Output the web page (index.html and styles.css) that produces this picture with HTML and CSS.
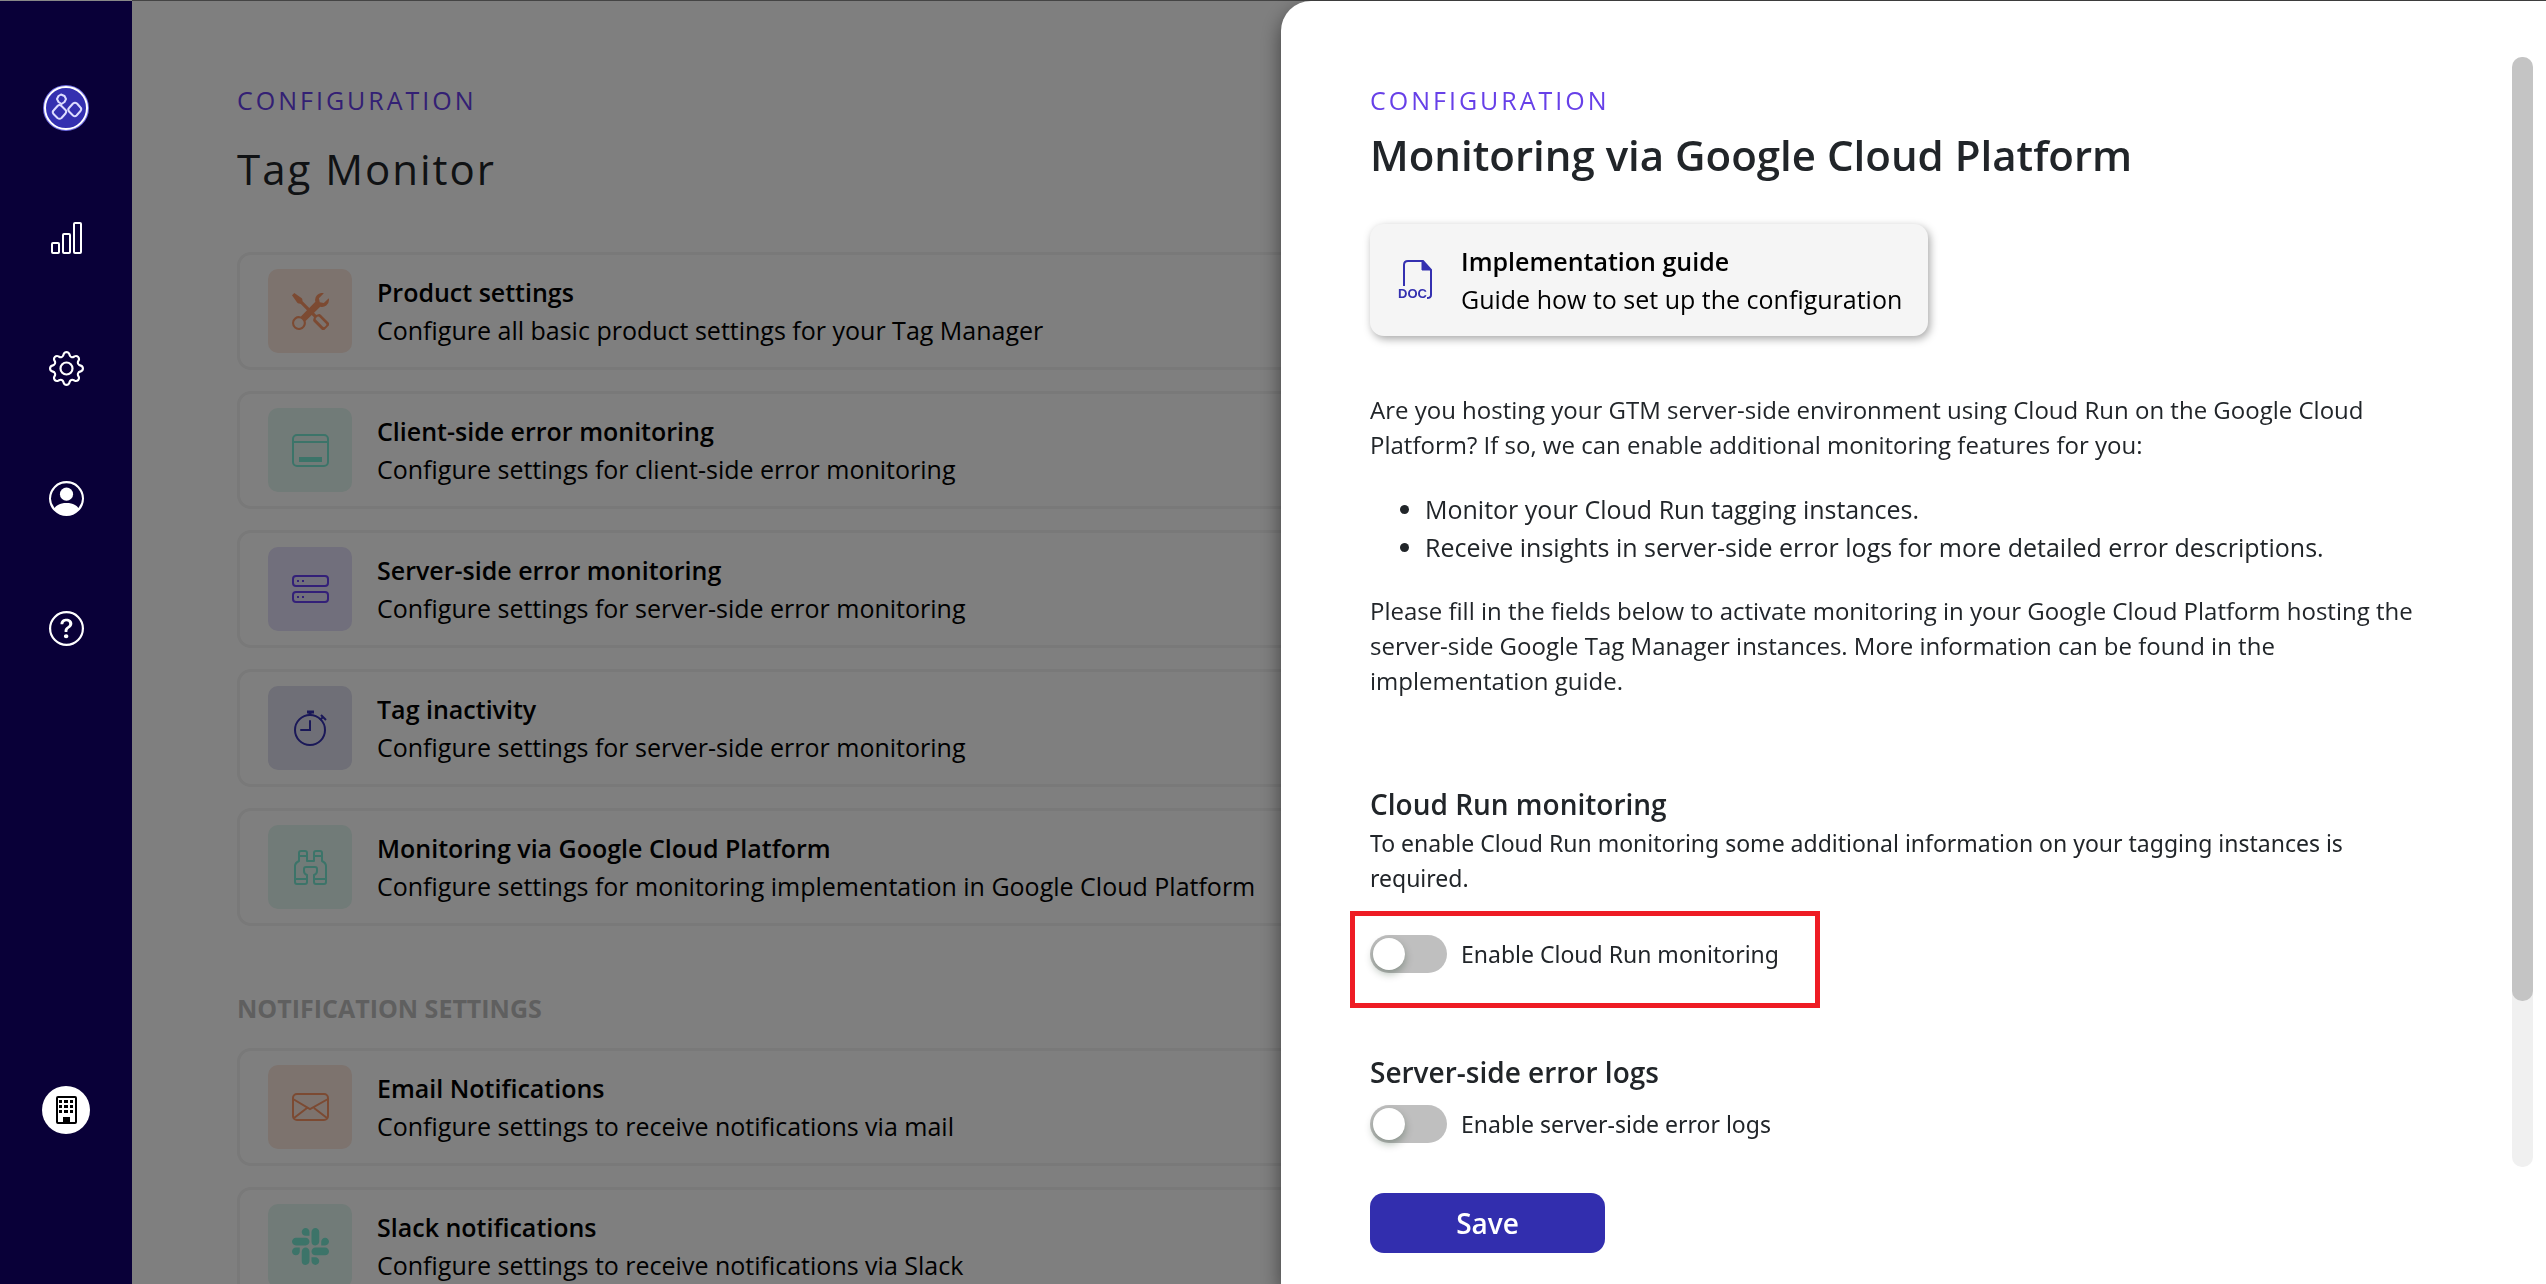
FILE: index.html
```html
<!DOCTYPE html>
<html lang="en">
<head>
<meta charset="utf-8">
<meta name="viewport" content="width=device-width, initial-scale=1">
<title>Tag Monitor – Configuration</title>
<link rel="stylesheet" href="styles.css">
</head>
<body>
<div class="app">
  <nav class="sidebar" aria-label="Main">
    <a class="nav-link logo" href="#" aria-label="Home">
      <svg width="46" height="46" viewBox="0 0 46 46" fill="none">
        <circle cx="23" cy="23" r="22" fill="#3430b0" stroke="#6e6be0" stroke-width="2"/>
        <circle cx="23" cy="23" r="21" stroke="#fff" stroke-width="2"/>
        <g stroke="#dcdcff" stroke-width="2" stroke-linejoin="round">
          <path d="M18 9.500l3.500 1.500 1.500 3-1.500 3-3 2-3-2-1.500-3 1.500-3z"/>
          <path d="M14.500 21q2-2 4 0l4 4q1.500 1.500 0 3.500l-4 4.500q-2 1.500-4 0l-4-4q-1.500-2 0-3.500z"/>
          <path d="M30 18.500q2-1.500 4 0l3.500 4q1.500 1.500 0 3.500l-4 4.500q-1.500 1.500-3.500 0l-4-4q-1.500-2 0-3.500z"/>
        </g>
      </svg>
    </a>
    <a class="nav-link" href="#" aria-label="Reports">
      <svg width="33" height="33" viewBox="0 0 33 33" fill="none" stroke="#fff" stroke-width="2">
        <rect x="2" y="21" width="7" height="10" rx="1"/><rect x="13" y="12" width="7" height="19" rx="1"/><rect x="24" y="1" width="7" height="30" rx="1"/>
      </svg>
    </a>
    <a class="nav-link" href="#" aria-label="Settings">
      <svg width="35" height="35" viewBox="0 0 16 16" fill="#fff">
        <path d="M8 4.754a3.246 3.246 0 1 0 0 6.492 3.246 3.246 0 0 0 0-6.492zM5.754 8a2.246 2.246 0 1 1 4.492 0 2.246 2.246 0 0 1-4.492 0z"/>
        <path d="M9.796 1.343c-.527-1.790-3.065-1.790-3.592 0l-.094.319a.873.873 0 0 1-1.255.52l-.292-.16c-1.640-.892-3.433.902-2.540 2.541l.159.292a.873.873 0 0 1-.52 1.255l-.319.094c-1.790.527-1.790 3.065 0 3.592l.319.094a.873.873 0 0 1 .52 1.255l-.16.292c-.892 1.640.901 3.434 2.541 2.540l.292-.159a.873.873 0 0 1 1.255.52l.094.319c.527 1.790 3.065 1.790 3.592 0l.094-.319a.873.873 0 0 1 1.255-.52l.292.16c1.640.893 3.434-.902 2.540-2.541l-.159-.292a.873.873 0 0 1 .52-1.255l.319-.094c1.790-.527 1.790-3.065 0-3.592l-.319-.094a.873.873 0 0 1-.52-1.255l.16-.292c.893-1.640-.902-3.433-2.541-2.540l-.292.159a.873.873 0 0 1-1.255-.52l-.094-.319zm-2.633.283c.246-.835 1.428-.835 1.674 0l.094.319a1.873 1.873 0 0 0 2.693 1.115l.291-.16c.764-.415 1.600.42 1.184 1.185l-.159.292a1.873 1.873 0 0 0 1.116 2.692l.318.094c.835.246.835 1.428 0 1.674l-.319.094a1.873 1.873 0 0 0-1.115 2.693l.16.291c.415.764-.42 1.600-1.185 1.184l-.291-.159a1.873 1.873 0 0 0-2.693 1.116l-.094.318c-.246.835-1.428.835-1.674 0l-.094-.319a1.873 1.873 0 0 0-2.692-1.115l-.292.16c-.764.415-1.600-.42-1.184-1.185l.159-.291A1.873 1.873 0 0 0 1.945 8.930l-.319-.094c-.835-.246-.835-1.428 0-1.674l.319-.094A1.873 1.873 0 0 0 3.060 4.377l-.16-.292c-.415-.764.42-1.600 1.185-1.184l.292.159a1.873 1.873 0 0 0 2.692-1.115l.094-.319z"/>
      </svg>
    </a>
    <a class="nav-link" href="#" aria-label="Account">
      <svg width="35" height="35" viewBox="0 0 16 16" fill="#fff">
        <path d="M11 6a3 3 0 1 1-6 0 3 3 0 0 1 6 0z"/>
        <path fill-rule="evenodd" d="M0 8a8 8 0 1 1 16 0A8 8 0 0 1 0 8zm8-7a7 7 0 0 0-5.468 11.370C3.242 11.226 4.805 10 8 10s4.757 1.225 5.468 2.370A7 7 0 0 0 8 1z"/>
      </svg>
    </a>
    <a class="nav-link" href="#" aria-label="Help">
      <svg width="35" height="35" viewBox="0 0 16 16" fill="#fff">
        <path d="M8 15A7 7 0 1 1 8 1a7 7 0 0 1 0 14zm0 1A8 8 0 1 0 8 0a8 8 0 0 0 0 16z"/>
        <path d="M5.255 5.786a.237.237 0 0 0 .241.247h.825c.138 0 .248-.113.266-.25.09-.656.54-1.134 1.342-1.134.686 0 1.314.343 1.314 1.168 0 .635-.374.927-.965 1.371-.673.489-1.206 1.060-1.168 1.987l.003.217a.25.25 0 0 0 .25.246h.811a.25.25 0 0 0 .25-.25v-.105c0-.718.273-.927 1.010-1.486.609-.463 1.244-.977 1.244-2.056 0-1.511-1.276-2.241-2.673-2.241-1.267 0-2.655.59-2.750 2.286zm1.557 5.763c0 .533.425.927 1.010.927.609 0 1.028-.394 1.028-.927 0-.552-.42-.94-1.029-.94-.584 0-1.009.388-1.009.94z"/>
      </svg>
    </a>
    <a class="nav-link org" href="#" aria-label="Organisation">
      <svg width="48" height="48" viewBox="0 0 48 48">
        <circle cx="24" cy="24" r="24" fill="#fff"/>
        <rect x="15" y="11" width="19" height="26" rx="1" fill="none" stroke="#000" stroke-width="2"/>
        <path d="M17 14h3v3h-3zM22 14h4v3h-4zM28 14h3v3h-3zM17 19h3v3h-3zM22 19h4v3h-4zM28 19h3v3h-3zM17 24h3v3h-3zM22 24h4v3h-4zM28 24h3v3h-3zM21 31h7v6h-7z"/>
      </svg>
    </a>
  </nav>

  <main class="main">
    <p class="eyebrow">CONFIGURATION</p>
    <h1 class="page-title">Tag Monitor</h1>
    <div class="cards">
      <a class="card" href="#">
        <span class="tile orange"><svg width="37" height="37" viewBox="0 0 16 16" fill="currentColor"><path fill-rule="evenodd" d="M1 0L0 1l2.200 3.081a1 1 0 0 0 .815.419h.07a1 1 0 0 1 .708.293l2.675 2.675-2.617 2.654A3.003 3.003 0 0 0 0 13a3 3 0 1 0 5.878-.851l2.654-2.617.968.968-.305.914a1 1 0 0 0 .242 1.023l3.356 3.356a1 1 0 0 0 1.414 0l1.586-1.586a1 1 0 0 0 0-1.414l-3.356-3.356a1 1 0 0 0-1.023-.242L10.500 9.500l-.96-.96 2.680-2.643A3.005 3.005 0 0 0 16 3c0-.269-.035-.53-.102-.777l-2.140 2.141L12 4l-.364-1.757L13.777.102a3 3 0 0 0-3.675 3.680L7.462 6.460 4.793 3.793a1 1 0 0 1-.293-.707v-.071a1 1 0 0 0-.419-.814L1 0zm9.900 10.300a.6.600 0 0 1 .8 0l3 3a.6.600 0 0 1 0 .8l-.5.500a.6.600 0 0 1-.8 0l-3-3a.6.600 0 0 1 0-.8zM3 10.900a2.100 2.100 0 1 0 0 4.200 2.100 2.100 0 0 0 0-4.200z"/></svg></span>
        <span class="card-text"><strong>Product settings</strong><span>Configure all basic product settings for your Tag Manager</span></span>
      </a>
      <a class="card" href="#">
        <span class="tile green"><svg width="37" height="37" viewBox="0 0 37 37" fill="none" stroke="currentColor" stroke-width="2"><rect x="1" y="3" width="35" height="31" rx="4"/><path d="M1 10h35"/><path d="M7 25h23v5H7z" fill="currentColor" stroke="none"/></svg></span>
        <span class="card-text"><strong>Client-side error monitoring</strong><span>Configure settings for client-side error monitoring</span></span>
      </a>
      <a class="card" href="#">
        <span class="tile purple"><svg width="37" height="37" viewBox="0 0 37 37" fill="none" stroke="currentColor" stroke-width="2"><rect x="1" y="5" width="35" height="10" rx="3"/><rect x="1" y="21" width="35" height="10" rx="3"/><path d="M5 10h2m3 0h2M5 26h2m3 0h2"/></svg></span>
        <span class="card-text"><strong>Server-side error monitoring</strong><span>Configure settings for server-side error monitoring</span></span>
      </a>
      <a class="card" href="#">
        <span class="tile navy"><svg width="37" height="37" viewBox="0 0 37 37" fill="none" stroke="currentColor" stroke-width="2"><circle cx="18" cy="20" r="15"/><path d="M18 11v9H9" stroke-linecap="round"/><path d="M15 2h7M18 3v3" stroke-width="3"/><path d="M29 5l5 5M31 7l-3 3" /></svg></span>
        <span class="card-text"><strong>Tag inactivity</strong><span>Configure settings for server-side error monitoring</span></span>
      </a>
      <a class="card" href="#">
        <span class="tile green"><svg width="37" height="37" viewBox="0 0 37 37" fill="none" stroke="currentColor" stroke-width="2" stroke-linejoin="round"><path d="M7 4q0-2 2-2h4q2 0 2 2v8h7V4q0-2 2-2h4q2 0 2 2v8q4 2 4 5v16q0 2-2 2H24q-2 0-2-2v-7q3-1 3-4v-2q0-2-2-2h-9q-2 0-2 2v2q0 3 3 4v7q0 2-2 2H5q-2 0-2-2V17q0-3 4-5zM7 7h8M22 7h8M3 30h12M22 30h12"/></svg></span>
        <span class="card-text"><strong>Monitoring via Google Cloud Platform</strong><span>Configure settings for monitoring implementation in Google Cloud Platform</span></span>
      </a>
    </div>
    <h2 class="group-title">NOTIFICATION SETTINGS</h2>
    <div class="cards">
      <a class="card" href="#">
        <span class="tile orange"><svg width="37" height="37" viewBox="0 0 37 37" fill="none" stroke="currentColor" stroke-width="2"><rect x="1" y="5" width="35" height="26" rx="4"/><path d="M1 10l17 10 18-10M2 29l13-10M35 29L22 19"/></svg></span>
        <span class="card-text"><strong>Email Notifications</strong><span>Configure settings to receive notifications via mail</span></span>
      </a>
      <a class="card" href="#">
        <span class="tile green"><svg width="37" height="37" viewBox="0 0 16 16" fill="currentColor"><path d="M3.362 10.110c0 .926-.756 1.681-1.681 1.681S0 11.036 0 10.111C0 9.186.756 8.430 1.680 8.430h1.682v1.680zm.846 0c0-.924.756-1.680 1.681-1.680s1.681.756 1.681 1.680v4.210c0 .924-.756 1.680-1.680 1.680a1.685 1.685 0 0 1-1.682-1.680v-4.210zM5.890 3.362c-.926 0-1.682-.756-1.682-1.681S4.964 0 5.890 0s1.680.756 1.680 1.680v1.682H5.890zm0 .846c.924 0 1.680.756 1.680 1.681S6.814 7.570 5.890 7.570H1.680C.757 7.570 0 6.814 0 5.890c0-.926.756-1.682 1.680-1.682h4.210zm6.749 1.682c0-.926.755-1.682 1.680-1.682.925 0 1.681.756 1.681 1.681s-.756 1.681-1.680 1.681h-1.681V5.890zm-.848 0c0 .924-.755 1.680-1.680 1.680A1.685 1.685 0 0 1 8.430 5.890V1.680C8.430.757 9.186 0 10.110 0c.926 0 1.681.756 1.681 1.680v4.210zm-1.681 6.748c.926 0 1.682.756 1.682 1.681S11.036 16 10.110 16s-1.681-.756-1.681-1.680v-1.682h1.680zm0-.847c-.924 0-1.680-.755-1.680-1.680 0-.925.756-1.681 1.680-1.681h4.210c.924 0 1.680.756 1.680 1.680 0 .926-.756 1.682-1.680 1.682h-4.210z"/></svg></span>
        <span class="card-text"><strong>Slack notifications</strong><span>Configure settings to receive notifications via Slack</span></span>
      </a>
    </div>
  </main>
</div>

<div class="backdrop"></div>

<aside class="panel" role="dialog" aria-labelledby="panel-title">
  <div class="panel-main">
    <div class="panel-body">
      <p class="eyebrow">CONFIGURATION</p>
      <h2 class="panel-title" id="panel-title">Monitoring via Google Cloud Platform</h2>
      <a class="guide" href="#">
        <svg class="guide-icon" width="36" height="40" viewBox="0 0 36 40" fill="none" stroke="#3430b0" stroke-width="2">
          <path d="M6 26V5q0-4 4-4h15l8 9v25q0 3-4 3"/><path d="M24 1v9h9z" fill="#3430b0" stroke-width="1"/>
          <text class="doc-label" x="0" y="38">DOC</text>
        </svg>
        <span class="card-text"><strong>Implementation guide</strong><span>Guide how to set up the configuration</span></span>
      </a>
      <p class="copy">Are you hosting your GTM server-side environment using Cloud Run on the Google Cloud Platform? If so, we can enable additional monitoring features for you:</p>
      <ul class="features">
        <li>Monitor your Cloud Run tagging instances.</li>
        <li>Receive insights in server-side error logs for more detailed error descriptions.</li>
      </ul>
      <p class="copy">Please fill in the fields below to activate monitoring in your Google Cloud Platform hosting the server-side Google Tag Manager instances. More information can be found in the implementation guide.</p>

      <section class="option">
        <h3>Cloud Run monitoring</h3>
        <p class="hint">To enable Cloud Run monitoring some additional information on your tagging instances is required.</p>
        <div class="highlight">
          <label class="switch"><input type="checkbox"><span>Enable Cloud Run monitoring</span></label>
        </div>
      </section>
      <section class="option-next">
        <h3>Server-side error logs</h3>
        <label class="switch"><input type="checkbox"><span>Enable server-side error logs</span></label>
      </section>
    </div>
    <button class="save" type="button">Save</button>
  </div>
  <div class="scroll-track" aria-hidden="true"><div class="scroll-thumb"></div></div>
</aside>
</body>
</html>
```
FILE: styles.css
```css
:root {
  --font: "Open Sans", "Noto Sans", sans-serif;
  --font-form: "Noto Sans", "Open Sans", sans-serif;
  --accent: #6740e8;
  --brand: #322eae;
  --ink: #212529;
}

* { box-sizing: border-box; }

body {
  margin: 0;
  height: 100vh;
  overflow: hidden;
  font-family: var(--font);
  font-size: 25px;
  line-height: 38px;
  color: var(--ink);
  background: #fff;
}

h1, h2, h3, p, ul { margin: 0; }
a { color: inherit; text-decoration: none; }
svg { display: block; }

.app {
  display: flex;
  height: 100%;
  border-top: 1px solid #888;
}

/* Sidebar */
.sidebar {
  position: relative;
  z-index: 2;
  flex: none;
  width: 132px;
  background: #090038;
  display: flex;
  flex-direction: column;
  align-items: center;
  padding: 75px 0 142px;
  gap: 66px;
}
.nav-link {
  display: flex;
  align-items: center;
  justify-content: center;
  width: 64px;
  height: 64px;
}
.org { margin-top: auto; }

/* Settings overview */
.main {
  flex: 1;
  min-width: 0;
  padding: 81px 105px 0;
}
.eyebrow {
  font-size: 25px;
  line-height: 36px;
  letter-spacing: 3px;
  color: var(--accent);
}
.page-title {
  margin-top: 26px;
  font-size: 42px;
  line-height: 50px;
  font-weight: 400;
  letter-spacing: 2px;
}
.cards {
  display: flex;
  flex-direction: column;
  gap: 21px;
  margin-top: 58px;
}
.card {
  display: flex;
  align-items: center;
  gap: 25px;
  padding: 14px 28px;
  border: 3px solid #f2f2f2;
  border-radius: 14px;
  color: #000;
}
.tile {
  flex: none;
  display: flex;
  align-items: center;
  justify-content: center;
  width: 84px;
  height: 84px;
  border-radius: 10px;
}
.orange { color: #f89464; background: #fae6dc; }
.green { color: #78e8d2; background: #e2f6f0; }
.purple { color: #6740f0; background: #e2def8; }
.navy { color: #3430b0; background: #dedeee; }
.card-text {
  display: flex;
  flex-direction: column;
  color: #000;
}
.card-text strong { font-weight: 600; }
.group-title {
  margin-top: 64px;
  font-size: 25px;
  line-height: 36px;
  font-weight: 700;
  color: #bebebe;
}
.group-title + .cards { margin-top: 22px; }

.backdrop {
  position: fixed;
  inset: 0 0 0 132px;
  background: rgba(0, 0, 0, .5);
}

/* Slide-over panel */
.panel {
  position: fixed;
  z-index: 3;
  top: 1px;
  right: 0;
  bottom: 0;
  width: calc(50% - 8px);
  display: flex;
  justify-content: space-between;
  background: #fff;
  border-radius: 30px 0 0 0;
  box-shadow: 0 8px 20px rgba(0, 0, 0, .5);
}
.panel-main {
  flex: 1;
  display: flex;
  flex-direction: column;
  align-items: flex-start;
  padding: 81px 89px 31px;
}
.panel-body {
  flex: 1;
  min-height: 0;
}
.panel-title {
  margin-top: 12px;
  font-size: 42px;
  line-height: 50px;
  font-weight: 600;
}
.guide {
  display: inline-flex;
  align-items: center;
  gap: 27px;
  margin-top: 44px;
  padding: 18px 26px 18px 28px;
  border-radius: 14px;
  background: #f5f5f5;
  box-shadow: 2px 3px 8px rgba(0, 0, 0, .35);
}
.guide-icon { flex: none; }
.doc-label {
  font: 700 13px "Liberation Sans", sans-serif;
  fill: #3430b0;
  stroke: none;
}
.copy {
  font-size: 24px;
  line-height: 35px;
}
.guide + .copy { margin-top: 56px; }
.features {
  margin: 28px 0 27px;
  padding-left: 55px;
}
h3 {
  font-size: 28px;
  line-height: 36px;
  font-weight: 600;
}
.option { margin-top: 88px; }
.hint {
  margin-top: 4px;
  font-family: var(--font-form);
  font-size: 23px;
  line-height: 35px;
}
.highlight {
  max-width: 470px;
  margin: 15px 0 0 -20px;
  padding: 19px 15px 30px;
  border: 5px solid #ee1c24;
}
.switch {
  display: flex;
  align-items: center;
  gap: 14px;
  font-family: var(--font-form);
  font-size: 23px;
}
.switch input {
  appearance: none;
  flex: none;
  display: flex;
  align-items: center;
  width: 77px;
  height: 38px;
  margin: 0;
  padding: 0 3px;
  border-radius: 19px;
  background: #bfbfbf;
}
.switch input::before {
  content: "";
  width: 32px;
  height: 32px;
  border-radius: 50%;
  background: #fff;
  box-shadow: 0 4px 8px rgba(0, 35, 11, .3);
}
.switch input:checked { background: var(--brand); justify-content: flex-end; }
.option-next { margin-top: 46px; }
.option-next .switch { margin-top: 15px; }

.save {
  width: 235px;
  height: 60px;
  border: 0;
  border-radius: 14px;
  background: var(--brand);
  color: #fff;
  font: 600 28px/36px var(--font);
}

.scroll-track {
  flex: none;
  width: 21px;
  margin: 56px 13px 117px 0;
  border-radius: 10px;
  background: #f0f0f0;
}
.scroll-thumb {
  height: 85%;
  border-radius: 10px;
  background: #c4c4c4;
}
```
